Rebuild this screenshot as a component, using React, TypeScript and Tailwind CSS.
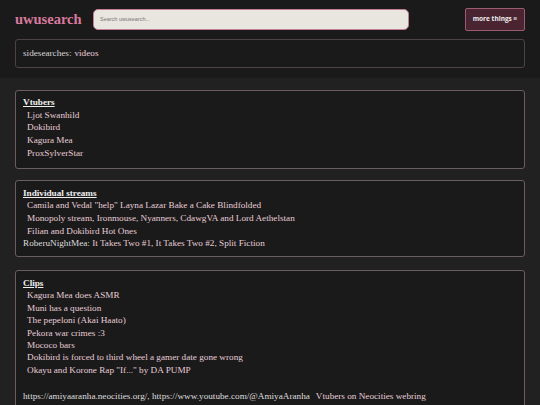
import React from "react";

const serif = { fontFamily: '"Liberation Serif", "DejaVu Serif", serif' };

function Card({ title, children, className = "" }: { title: string; children: React.ReactNode; className?: string }) {
  return (
    <div className={`mx-[15px] rounded-[3px] border border-[#6b5c62] bg-[#1b1a1b] px-[7px] ${className}`}>
      <div className="font-bold text-[#eeeeee] underline underline-offset-[1px]">{title}</div>
      {children}
    </div>
  );
}

function Item({ children }: { children: React.ReactNode }) {
  return <div className="pl-[4px] text-[#e6cdd6]">{children}</div>;
}

export default function App() {
  return (
    <div className="h-[405px] w-[540px] overflow-hidden bg-[#212121] text-[9.2px] leading-[12.7px]" style={serif}>
      <div className="bg-[#1b1a1b] pb-[10px] pt-[8px]">
        <div className="flex items-center px-[15px]">
          <div className="w-[78px] text-[14.5px] font-bold text-[#d9799d]">uwusearch</div>
          <div className="flex h-[21px] w-[316px] items-center rounded-[5px] border border-[#c57d96] bg-[#e8e6df] pl-[6px] text-[5.5px] text-[#777]" style={{ fontFamily: '"Liberation Sans", sans-serif' }}>
            Search uwusearch...
          </div>
          <div className="flex-1" />
          <div className="flex h-[23px] w-[60px] items-center justify-center rounded-[2px] border border-[#9c5b74] bg-[#4b2432] text-[6.5px] font-bold text-[#eee]" style={{ fontFamily: '"Open Sans", sans-serif' }}>
            more things ≡
          </div>
        </div>
        <div className="mx-[15px] mt-[8px] flex h-[29px] items-center rounded-[3px] border border-[#4d4246] bg-[#1b1a1b] px-[7px] text-[9.2px]">
          <span className="text-[#d6d6d6]">sidesearches:</span>
          <span className="ml-[3px] text-[#eacfda]">videos</span>
        </div>
      </div>
      <div className="pt-[12px]">
        <Card title="Vtubers" className="pt-[5px] pb-[8px]">
          <Item>Ljot Swanhild</Item>
          <Item>Dokibird</Item>
          <Item>Kagura Mea</Item>
          <Item>ProxSylverStar</Item>
        </Card>
        <Card title="Individual streams" className="mt-[11px] pt-[6px] pb-[6px]">
          <Item>Camila and Vedal "help" Layna Lazar Bake a Cake Blindfolded</Item>
          <Item>Monopoly stream, Ironmouse, Nyanners, CdawgVA and Lord Aethelstan</Item>
          <Item>Filian and Dokibird Hot Ones</Item>
          <div className="text-[#dddddd]">RoberuNightMea: <span className="text-[#e6cdd6]">It Takes Two #1, It Takes Two #2, Split Fiction</span></div>
        </Card>
        <Card title="Clips" className="mt-[13px] pt-[6px] pb-[8px] leading-[12.4px]">
          <Item>Kagura Mea does ASMR</Item>
          <Item>Muni has a question</Item>
          <Item>The pepeloni (Akai Haato)</Item>
          <Item>Pekora war crimes :3</Item>
          <Item>Mococo bars</Item>
          <Item>Dokibird is forced to third wheel a gamer date gone wrong</Item>
          <Item>Okayu and Korone Rap "If..." by DA PUMP</Item>
          <div className="h-[14px]" />
          <div className="text-[#dddddd]">
            https://amiyaaranha.neocities.org/, https://www.youtube.com/@AmiyaAranha
            <span className="ml-[6px] text-[#e6cdd6]">Vtubers on Neocities webring</span>
          </div>
        </Card>
      </div>
    </div>
  );
}
